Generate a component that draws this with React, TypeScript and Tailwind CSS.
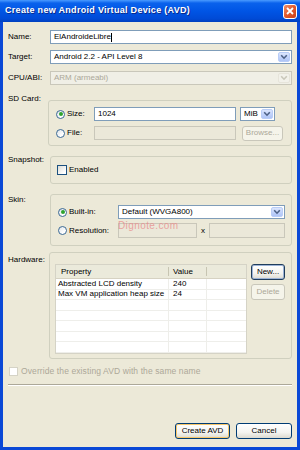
import React from "react";

function Arrow({ disabled = false }: { disabled?: boolean }) {
  return (
    <div
      className={`w-[12px] h-full flex items-center justify-center rounded-[2px] border ${
        disabled
          ? "border-[#e6e4da] bg-[#f2f1ea]"
          : "border-[#b9cdf7] bg-[linear-gradient(180deg,#dce6fd_0%,#c3d4fb_50%,#afc5f6_100%)]"
      }`}
    >
      <svg width="8" height="6" viewBox="0 0 8 6">
        <path
          d="M1.2 1.3 L4 4.2 L6.8 1.3"
          fill="none"
          stroke={disabled ? "#c9c7ba" : "#4d6185"}
          strokeWidth="1.6"
        />
      </svg>
    </div>
  );
}

function Combo({ text, disabled = false, className = "" }: { text: string; disabled?: boolean; className?: string }) {
  return (
    <div
      className={`h-[14px] flex items-stretch border p-[1px] ${
        disabled ? "border-[#c9c7ba] bg-[#f0efe6] text-[#aca899]" : "border-[#7f9db9] bg-white text-black"
      } ${className}`}
    >
      <div className="flex-1 flex items-center pl-[2px] leading-none overflow-hidden whitespace-nowrap">{text}</div>
      <Arrow disabled={disabled} />
    </div>
  );
}

function Radio({ checked = false }: { checked?: boolean }) {
  return (
    <div className="w-[9px] h-[9px] rounded-full border border-[#3c6a95] bg-[linear-gradient(135deg,#dce2e8_0%,#ffffff_70%)] flex items-center justify-center shrink-0">
      {checked && <div className="w-[4px] h-[4px] rounded-full bg-[#2ea32e]" />}
    </div>
  );
}

function Group({ children, className = "" }: { children: React.ReactNode; className?: string }) {
  return <div className={`flex-1 border border-[#d0d0bf] rounded-[3px] ${className}`}>{children}</div>;
}

function XpButton({
  children,
  disabled = false,
  variant = "normal",
  className = "",
}: {
  children: React.ReactNode;
  disabled?: boolean;
  variant?: "normal" | "default" | "focus";
  className?: string;
}) {
  if (disabled) {
    return (
      <div className={`flex items-center justify-center border border-[#c9c7ba] rounded-[3px] bg-[#f5f4ea] text-[#aca899] ${className}`}>
        {children}
      </div>
    );
  }
  return (
    <div
      className={`flex items-center justify-center border rounded-[3px] bg-[linear-gradient(180deg,#ffffff_0%,#f4f4f0_60%,#dcdad0_100%)] ${
        variant === "default"
          ? "border-[#003c74] shadow-[inset_0_0_0_1px_#f7c66a]"
          : variant === "focus"
          ? "border-[#1f3d5c] shadow-[inset_0_0_0_1px_#9db3d6]"
          : "border-[#003c74]"
      } ${className}`}
    >
      {children}
    </div>
  );
}

export default function App() {
  const rows = [
    ["Abstracted LCD density", "240"],
    ["Max VM application heap size", "24"],
    ["", ""],
    ["", ""],
    ["", ""],
    ["", ""],
    ["", ""],
  ];

  return (
    <div className="w-[300px] h-[450px] flex flex-col bg-[#0a48d6] font-['Liberation_Sans',Arial,sans-serif] text-[8px] text-black">
      {/* title bar */}
      <div className="h-[22px] shrink-0 flex items-center justify-between pl-[5px] pr-[3px] bg-[linear-gradient(180deg,#4a9bff_0%,#0a62ec_14%,#0055e5_50%,#004ad6_85%,#0040bf_100%)]">
        <span className="text-white font-bold text-[9px] tracking-[0.3px] [text-shadow:1px_1px_0_#0b2a8a]">
          Create new Android Virtual Device (AVD)
        </span>
        <div className="w-[14px] h-[15px] rounded-[3px] border border-white bg-[linear-gradient(135deg,#f0906a_0%,#e2582c_50%,#c8401a_100%)] flex items-center justify-center">
          <svg width="8" height="8" viewBox="0 0 8 8">
            <path d="M1 1 L7 7 M7 1 L1 7" stroke="white" strokeWidth="1.8" />
          </svg>
        </div>
      </div>

      {/* body */}
      <div className="flex-1 mx-[3px] mb-[3px] bg-[#ece9d8] flex flex-col px-[5px]">
        {/* Name */}
        <div className="flex items-center mt-[8px]">
          <div className="w-[42px]">Name:</div>
          <div className="flex-1 h-[14px] border border-[#7f9db9] bg-white flex items-center pl-[3px] leading-none">
            <span>ElAndroideLibre</span>
            <span className="w-[1px] h-[9px] bg-black" />
          </div>
        </div>

        {/* Target */}
        <div className="flex items-center mt-[6px]">
          <div className="w-[42px]">Target:</div>
          <Combo text="Android 2.2 - API Level 8" className="flex-1" />
        </div>

        {/* CPU/ABI */}
        <div className="flex items-center mt-[7px]">
          <div className="w-[42px]">CPU/ABI:</div>
          <Combo text="ARM (armeabi)" disabled className="flex-1" />
        </div>

        {/* SD Card */}
        <div className="flex items-start mt-[15px]">
          <div className="w-[42px] -mt-[7px]">SD Card:</div>
          <Group className="pl-[7px] pr-[8px] pt-[6px] pb-[5px] flex flex-col gap-[5px]">
            <div className="flex items-center h-[14px]">
              <div className="w-[38px] flex items-center gap-[2px]">
                <Radio checked />
                <span>Size:</span>
              </div>
              <div className="w-[142px] h-[14px] border border-[#7f9db9] bg-white flex items-center pl-[3px] leading-none">1024</div>
              <Combo text="MiB" className="w-[35px] ml-[4px]" />
            </div>
            <div className="flex items-center h-[14px]">
              <div className="w-[38px] flex items-center gap-[2px]">
                <Radio />
                <span>File:</span>
              </div>
              <div className="w-[142px] h-[14px] border border-[#c9c7ba] bg-[#ebe8d9]" />
              <XpButton disabled className="w-[41px] h-[15px] ml-[6px]">
                Browse...
              </XpButton>
            </div>
          </Group>
        </div>

        {/* Snapshot */}
        <div className="flex items-start mt-[10px]">
          <div className="w-[42px] -mt-[2px]">Snapshot:</div>
          <Group className="pl-[6px] h-[28px] flex items-center">
            <div className="w-[10px] h-[10px] border border-[#1c5180] bg-[linear-gradient(135deg,#dcdcd6_0%,#ffffff_80%)]" />
            <span className="ml-[2px]">Enabled</span>
          </Group>
        </div>

        {/* Skin */}
        <div className="flex items-start mt-[10px]">
          <div className="w-[42px]">Skin:</div>
          <Group className="pl-[7px] pr-[6px] pt-[10px] pb-[7px] flex flex-col gap-[4px]">
            <div className="flex items-center">
              <div className="w-[60px] flex items-center gap-[2px]">
                <Radio checked />
                <span>Built-in:</span>
              </div>
              <Combo text="Default (WVGA800)" className="flex-1" />
            </div>
            <div className="flex items-center relative">
              <div className="w-[60px] flex items-center gap-[2px]">
                <Radio />
                <span>Resolution:</span>
              </div>
              <div className="w-[79px] h-[15px] border border-[#c9c7ba] bg-[#ebe8d9]" />
              <span className="w-[12px] text-center">x</span>
              <div className="flex-1 h-[15px] border border-[#c9c7ba] bg-[#ebe8d9]" />
              <span className="absolute left-[60px] -top-[5px] text-[10px] text-[#e88a8a] opacity-75 tracking-[0.4px]">
                Dignote.com
              </span>
            </div>
          </Group>
        </div>

        {/* Hardware */}
        <div className="flex items-start mt-[6px]">
          <div className="w-[42px] mt-[2px]">Hardware:</div>
          <Group className="pl-[5px] pr-[6px] pt-[11px] pb-[4px] flex items-start gap-[4px]">
            <div className="w-[192px] h-[90px] border border-[#d5d3c6] bg-white overflow-hidden">
              <div className="h-[14px] flex bg-[#ebeadb] border-b border-[#d6d2c2]">
                <div className="w-[113px] flex items-center pl-[5px] border-r border-[#c7c5b2] my-[2px]">Property</div>
                <div className="w-[38px] flex items-center pl-[4px] border-r border-[#c7c5b2] my-[2px]">Value</div>
                <div className="flex-1" />
              </div>
              {rows.map((r, i) => (
                <div key={i} className="h-[10.5px] flex border-b border-[#eeeeea] leading-none">
                  <div className="w-[113px] flex items-center pl-[2px] border-r border-[#eeeeea] whitespace-nowrap">{r[0]}</div>
                  <div className="w-[38px] flex items-center pl-[4px] border-r border-[#eeeeea]">{r[1]}</div>
                  <div className="flex-1" />
                </div>
              ))}
            </div>
            <div className="flex flex-col gap-[4px]">
              <XpButton variant="focus" className="w-[34px] h-[16px]">
                New...
              </XpButton>
              <XpButton disabled className="w-[34px] h-[16px]">
                Delete
              </XpButton>
            </div>
          </Group>
        </div>

        {/* Override */}
        <div className="flex items-center mt-[6px] text-[#aca899]">
          <div className="w-[9px] h-[9px] border border-[#d5d3c6] bg-white ml-[1px]" />
          <span className="ml-[3px] text-[8.5px] tracking-[0.1px]">Override the existing AVD with the same name</span>
        </div>

        {/* separator */}
        <div className="mt-[6px] h-[2px] border-t border-[#aca899] border-b border-b-white" />

        {/* buttons */}
        <div className="mt-auto mb-[8px] flex justify-end gap-[6px]">
          <XpButton variant="default" className="w-[55px] h-[16px]">
            Create AVD
          </XpButton>
          <XpButton className="w-[56px] h-[16px]">Cancel</XpButton>
        </div>
      </div>
    </div>
  );
}
